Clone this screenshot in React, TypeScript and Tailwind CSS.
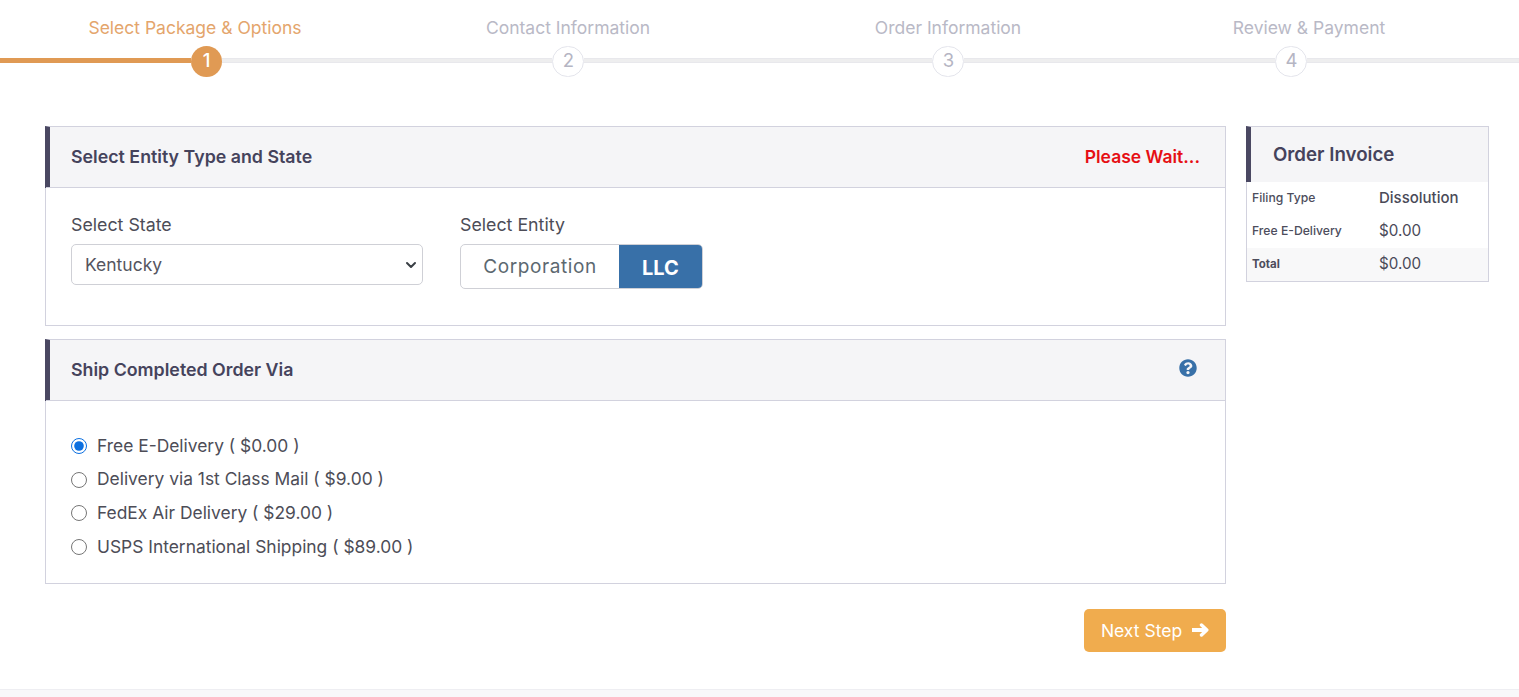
import React from "react";

const steps = [
  { label: "Select Package & Options", width: "w-[390px]" },
  { label: "Contact Information", width: "w-[356px]" },
  { label: "Order Information", width: "w-[404px]" },
  { label: "Review & Payment", width: "w-[318px]" },
];

const shipping = [
  { label: "Free E-Delivery ( $0.00 )", checked: true },
  { label: "Delivery via 1st Class Mail ( $9.00 )", checked: false },
  { label: "FedEx Air Delivery ( $29.00 )", checked: false },
  { label: "USPS International Shipping ( $89.00 )", checked: false },
];

const Circle = ({ n }: { n: number }) => (
  <div className="w-[32px] h-[31px] shrink-0 rounded-full border border-[#e4e5ec] bg-white flex items-center justify-center pl-px pb-[3px] text-[18.500px] leading-none text-[#b5b5c3]">
    {n}
  </div>
);

const Segment = ({ className }: { className: string }) => (
  <div className={`h-[5px] mt-[12px] shrink-0 bg-[#eeeeef] border-y border-[#e8e8ec] ${className}`} />
);

const CardHeader = ({ title, children }: { title: string; children?: React.ReactNode }) => (
  <div className="h-[62px] -ml-px -mt-px border-l-[5px] border-l-[#4a4862] border-t border-t-[#d2d2de] bg-[#f5f5f7] flex items-center justify-between pl-[21px] pr-[25px] shrink-0">
    <h2 className="text-[17.800px] font-semibold text-[#45435c]">{title}</h2>
    {children}
  </div>
);

export default function App() {
  return (
    <div className="min-h-[697px] bg-white flex flex-col font-['Inter',sans-serif] overflow-hidden">
      {/* Stepper */}
      <div className="flex pt-[17px] h-[28px] box-content">
        {steps.map((s, i) => (
          <div
            key={s.label}
            className={`${s.width} shrink-0 text-center text-[17.500px] leading-[22px] whitespace-nowrap ${i === 0 ? "text-[#e4a56c]" : "text-[#b9b9c6]"}`}
          >
            {s.label}
          </div>
        ))}
      </div>
      <div className="flex items-start h-[31px] mt-px">
        <div className="h-[5px] mt-[12px] w-[191px] shrink-0 bg-[#e09a54]" />
        <div className="w-[31px] h-[31px] shrink-0 rounded-full bg-[#e09a54] flex items-center justify-center pb-[3px] text-[18.500px] font-medium leading-none text-white">
          1
        </div>
        <Segment className="w-[330px]" />
        <Circle n={2} />
        <Segment className="w-[348px]" />
        <Circle n={3} />
        <Segment className="w-[311px]" />
        <Circle n={4} />
        <Segment className="flex-1" />
      </div>

      <div className="flex gap-[20px] pl-[45px] pr-[30px] pt-[49px]">
        {/* Left column */}
        <div className="w-[1181px] shrink-0 flex flex-col">
          <section className="h-[200px] border border-[#d2d2de] flex flex-col">
            <CardHeader title="Select Entity Type and State">
              <span className="text-[17.500px] font-semibold text-[#e60f14]">Please Wait...</span>
            </CardHeader>
            <div className="border-t border-[#d2d2de] -mt-px flex pl-[25px] pt-[26px] gap-[37px]">
              <div className="w-[352px]">
                <label className="block text-[17.800px] leading-[22px] text-[#4d4d57] mb-[8px]">Select State</label>
                <div className="relative">
                  <select className="w-full h-[41px] appearance-none rounded-[5px] border border-[#cfd0d6] bg-white pl-[13px] pt-[2px] text-[17.500px] text-[#555560] font-['Inter',sans-serif]">
                    <option>Kentucky</option>
                  </select>
                  <svg className="absolute right-[4px] top-[13px] w-[16px] h-[16px] pointer-events-none" viewBox="0 0 16 16" fill="none">
                    <path d="m4 6 4 4 4-4" stroke="#3a3f45" strokeWidth="2" strokeLinecap="round" strokeLinejoin="round" />
                  </svg>
                </div>
              </div>
              <div>
                <label className="block text-[17.800px] leading-[22px] text-[#4d4d57] mb-[8px]">Select Entity</label>
                <div className="flex h-[45px] w-[243px] rounded-[5px] border border-[#cfd0d6] overflow-hidden">
                  <div className="w-[158px] flex items-center justify-center pt-[2px] text-[19px] tracking-[0.600px] text-[#5c6870]">Corporation</div>
                  <div className="flex-1 bg-[#3870a8] flex items-center justify-center pt-[2px] text-[20px] font-bold text-white">LLC</div>
                </div>
              </div>
            </div>
          </section>

          <section className="h-[245px] mt-[13px] border border-[#d2d2de] flex flex-col">
            <CardHeader title="Ship Completed Order Via">
              <svg className="w-[18px] h-[18px] mr-[3px] mb-[5px]" viewBox="0 0 512 512" fill="#3870a8">
                <path d="M504 256c0 137-111 248-248 248S8 393 8 256 119 8 256 8s248 111 248 248zM262.700 90c-54.500 0-89.300 23-116.500 63.800-3.500 5.300-2.400 12.400 2.700 16.300l34.700 26.300c5.200 3.900 12.600 3 16.700-2.100 17.900-22.700 30.100-35.800 57.300-35.800 20.400 0 45.700 13.100 45.700 33 0 15-12.400 22.700-32.600 34-23.600 13.200-54.800 29.700-54.800 70.900V302c0 6.600 5.400 12 12 12h56c6.600 0 12-5.400 12-12v-1.300c0-28.600 83.500-29.800 83.500-107.100C378.400 135.300 317.900 90 262.700 90zM256 339c-25.500 0-46.200 20.700-46.200 46.200 0 25.500 20.700 46.200 46.200 46.200s46.200-20.700 46.200-46.200c0-25.500-20.700-46.200-46.200-46.200z" />
              </svg>
            </CardHeader>
            <div className="border-t border-[#d2d2de] -mt-px flex flex-col pl-[25px] pt-[28px]">
              {shipping.map((o) => (
                <label key={o.label} className="flex items-center h-[33.700px] gap-[10px] text-[17.400px] text-[#4d4d57]">
                  <input type="radio" name="ship" defaultChecked={o.checked} className="w-[16px] h-[16px] m-0 accent-[#0b6fe0]" />
                  {o.label}
                </label>
              ))}
            </div>
          </section>

          <div className="flex justify-end mt-[25px]">
            <button className="w-[142px] h-[43px] rounded-[5px] bg-[#f0ac4e] text-white text-[17.500px] flex items-center justify-center gap-[9px]">
              <span className="mt-[2px]">Next Step</span>
              <svg className="w-[18px] h-[14px] mb-px" viewBox="0 0 18 14" fill="none" stroke="currentColor" strokeLinejoin="round">
                <path d="M1 7h13" strokeWidth="4" strokeLinecap="butt" />
                <path d="M10.500 2 15.800 7 10.500 12" strokeWidth="3.400" strokeLinecap="round" />
              </svg>
            </button>
          </div>
        </div>

        {/* Order invoice */}
        <aside className="w-[243px] h-[156px] shrink-0 border border-[#d2d2de] flex flex-col">
          <div className="h-[56px] -ml-px -mt-px border-l-[5px] border-l-[#4a4862] border-t border-t-[#d2d2de] bg-[#f5f5f7] flex items-center pl-[22px] pt-[2px] shrink-0">
            <h3 className="text-[18.700px] font-semibold text-[#45435c]">Order Invoice</h3>
          </div>
          <InvoiceRow label="Filing Type" value="Dissolution" valueClass="font-medium !text-[15px]" />
          <InvoiceRow label="Free E-Delivery" value="$0.00" />
          <InvoiceRow label="Total" value="$0.00" total />
        </aside>
      </div>

      <div className="mt-[37px] h-[8px] border-t border-[#eeeef2] bg-[#f8f8f9]" />
    </div>
  );
}

function InvoiceRow({ label, value, valueClass = "", total = false }: { label: string; value: string; valueClass?: string; total?: boolean }) {
  return (
    <div className={`h-[33px] flex items-center pl-[5px] ${total ? "bg-[#f8f8f9]" : ""}`}>
      <div className={`w-[127px] text-[12.200px] text-[#4d4d5c] ${total ? "font-bold !text-[11.500px]" : "font-medium"}`}>{label}</div>
      <div className={`text-[15.200px] text-[#4a4a58] ${valueClass}`}>{value}</div>
    </div>
  );
}
